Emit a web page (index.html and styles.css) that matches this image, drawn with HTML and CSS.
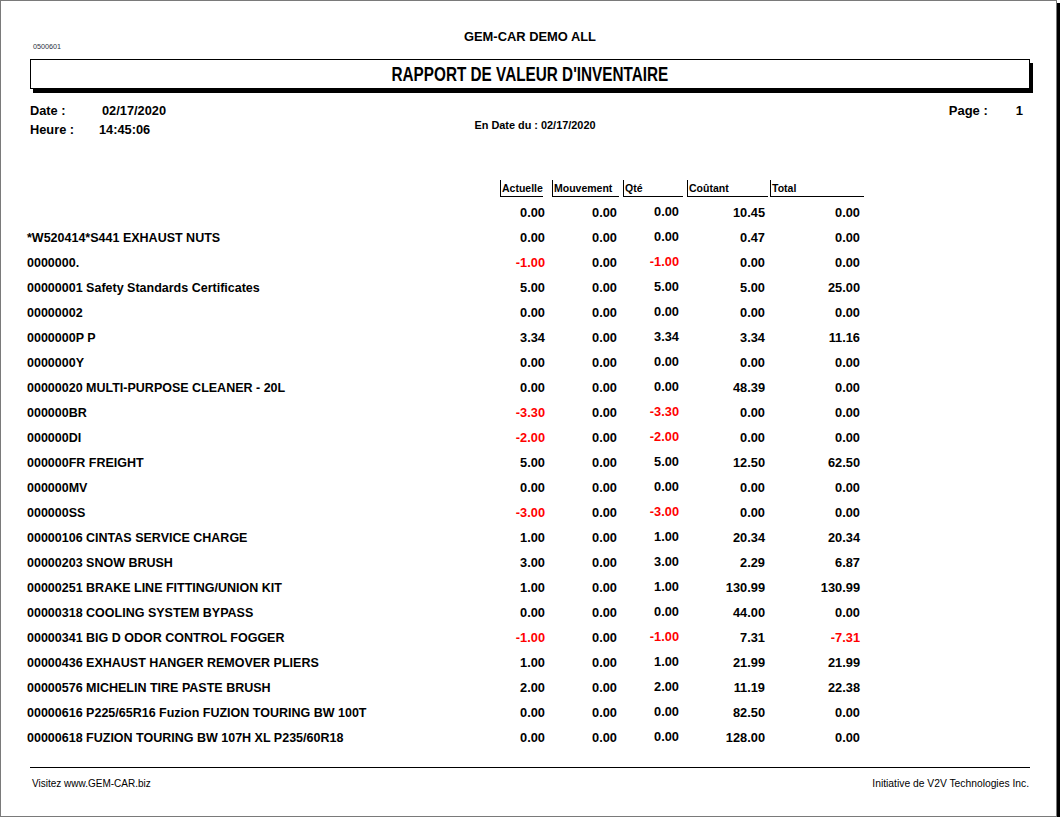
FILE: index.html
```html
<!DOCTYPE html>
<html lang="fr">
<head>
<meta charset="utf-8">
<title>Rapport de valeur d'inventaire</title>
<link rel="stylesheet" href="styles.css">
</head>
<body>
<div class="page">
  <div class="top-row">
    <div class="code">0500601</div>
    <div class="company">GEM-CAR DEMO ALL</div>
    <div></div>
  </div>
  <div class="title-box"><span class="title">RAPPORT DE VALEUR D'INVENTAIRE</span></div>
  <div class="meta">
    <div class="meta-left">
      <div class="meta-line"><span class="lbl lbl-date">Date :</span><span>02/17/2020</span></div>
      <div class="meta-line"><span class="lbl lbl-heure">Heure :</span><span>14:45:06</span></div>
    </div>
    <div class="meta-center">En Date du : 02/17/2020</div>
    <div class="meta-right"><span>Page :</span><span class="page-no">1</span></div>
  </div>

  <div class="table">
    <div class="thead">
      <div></div>
      <div class="th th1">Actuelle</div>
      <div class="th th2">Mouvement</div>
      <div class="th th3">Qté</div>
      <div class="th th4">Coûtant</div>
      <div class="th th5">Total</div>
    </div>
    <div class="tbody">
      <div class="row"><div class="name"></div><div class="n c1">0.00</div><div class="n c2">0.00</div><div class="n c3">0.00</div><div class="n c4">10.45</div><div class="n c5">0.00</div></div>
      <div class="row"><div class="name">*W520414*S441 EXHAUST NUTS</div><div class="n c1">0.00</div><div class="n c2">0.00</div><div class="n c3">0.00</div><div class="n c4">0.47</div><div class="n c5">0.00</div></div>
      <div class="row"><div class="name">0000000.</div><div class="n c1 neg">-1.00</div><div class="n c2">0.00</div><div class="n c3 neg">-1.00</div><div class="n c4">0.00</div><div class="n c5">0.00</div></div>
      <div class="row"><div class="name">00000001 Safety Standards Certificates</div><div class="n c1">5.00</div><div class="n c2">0.00</div><div class="n c3">5.00</div><div class="n c4">5.00</div><div class="n c5">25.00</div></div>
      <div class="row"><div class="name">00000002</div><div class="n c1">0.00</div><div class="n c2">0.00</div><div class="n c3">0.00</div><div class="n c4">0.00</div><div class="n c5">0.00</div></div>
      <div class="row"><div class="name">0000000P P</div><div class="n c1">3.34</div><div class="n c2">0.00</div><div class="n c3">3.34</div><div class="n c4">3.34</div><div class="n c5">11.16</div></div>
      <div class="row"><div class="name">0000000Y</div><div class="n c1">0.00</div><div class="n c2">0.00</div><div class="n c3">0.00</div><div class="n c4">0.00</div><div class="n c5">0.00</div></div>
      <div class="row"><div class="name">00000020 MULTI-PURPOSE CLEANER - 20L</div><div class="n c1">0.00</div><div class="n c2">0.00</div><div class="n c3">0.00</div><div class="n c4">48.39</div><div class="n c5">0.00</div></div>
      <div class="row"><div class="name">000000BR</div><div class="n c1 neg">-3.30</div><div class="n c2">0.00</div><div class="n c3 neg">-3.30</div><div class="n c4">0.00</div><div class="n c5">0.00</div></div>
      <div class="row"><div class="name">000000DI</div><div class="n c1 neg">-2.00</div><div class="n c2">0.00</div><div class="n c3 neg">-2.00</div><div class="n c4">0.00</div><div class="n c5">0.00</div></div>
      <div class="row"><div class="name">000000FR FREIGHT</div><div class="n c1">5.00</div><div class="n c2">0.00</div><div class="n c3">5.00</div><div class="n c4">12.50</div><div class="n c5">62.50</div></div>
      <div class="row"><div class="name">000000MV</div><div class="n c1">0.00</div><div class="n c2">0.00</div><div class="n c3">0.00</div><div class="n c4">0.00</div><div class="n c5">0.00</div></div>
      <div class="row"><div class="name">000000SS</div><div class="n c1 neg">-3.00</div><div class="n c2">0.00</div><div class="n c3 neg">-3.00</div><div class="n c4">0.00</div><div class="n c5">0.00</div></div>
      <div class="row"><div class="name">00000106 CINTAS SERVICE CHARGE</div><div class="n c1">1.00</div><div class="n c2">0.00</div><div class="n c3">1.00</div><div class="n c4">20.34</div><div class="n c5">20.34</div></div>
      <div class="row"><div class="name">00000203 SNOW BRUSH</div><div class="n c1">3.00</div><div class="n c2">0.00</div><div class="n c3">3.00</div><div class="n c4">2.29</div><div class="n c5">6.87</div></div>
      <div class="row"><div class="name">00000251 BRAKE LINE FITTING/UNION KIT</div><div class="n c1">1.00</div><div class="n c2">0.00</div><div class="n c3">1.00</div><div class="n c4">130.99</div><div class="n c5">130.99</div></div>
      <div class="row"><div class="name">00000318 COOLING SYSTEM BYPASS</div><div class="n c1">0.00</div><div class="n c2">0.00</div><div class="n c3">0.00</div><div class="n c4">44.00</div><div class="n c5">0.00</div></div>
      <div class="row"><div class="name">00000341 BIG D ODOR CONTROL FOGGER</div><div class="n c1 neg">-1.00</div><div class="n c2">0.00</div><div class="n c3 neg">-1.00</div><div class="n c4">7.31</div><div class="n c5 neg">-7.31</div></div>
      <div class="row"><div class="name">00000436 EXHAUST HANGER REMOVER PLIERS</div><div class="n c1">1.00</div><div class="n c2">0.00</div><div class="n c3">1.00</div><div class="n c4">21.99</div><div class="n c5">21.99</div></div>
      <div class="row"><div class="name">00000576 MICHELIN TIRE PASTE BRUSH</div><div class="n c1">2.00</div><div class="n c2">0.00</div><div class="n c3">2.00</div><div class="n c4">11.19</div><div class="n c5">22.38</div></div>
      <div class="row"><div class="name">00000616 P225/65R16 Fuzion FUZION TOURING BW 100T</div><div class="n c1">0.00</div><div class="n c2">0.00</div><div class="n c3">0.00</div><div class="n c4">82.50</div><div class="n c5">0.00</div></div>
      <div class="row"><div class="name">00000618 FUZION TOURING BW 107H XL P235/60R18</div><div class="n c1">0.00</div><div class="n c2">0.00</div><div class="n c3">0.00</div><div class="n c4">128.00</div><div class="n c5">0.00</div></div>
    </div>
  </div>

  <div class="footer">
    <span class="visit">Visitez www.GEM-CAR.biz</span>
    <span class="credit">Initiative de V2V Technologies Inc.</span>
  </div>
</div>
</body>
</html>
```

FILE: styles.css
```css
* { box-sizing: border-box; }

html, body {
  margin: 0;
  padding: 0;
  background: #ffffff;
}

body {
  font-family: "Liberation Sans", Arial, sans-serif;
  color: #000;
}

.page {
  width: 1057px;
  height: 817px;
  border: 1px solid #7a7a7a;
  box-shadow: 3px 3px 0 #000;
  display: flex;
  flex-direction: column;
  padding: 0 26px 0 29px;
  background: #fff;
}

.top-row {
  margin-top: 28px;
  height: 22px;
  display: grid;
  grid-template-columns: 1fr auto 1fr;
}

.code {
  align-self: end;
  font-size: 7.2px;
  line-height: 8px;
  color: #2a2f40;
  padding-left: 3px;
}

.company {
  font-size: 12.9px;
  font-weight: bold;
  line-height: 16px;
  text-align: center;
}

.title-box {
  margin-top: 8px;
  height: 30px;
  border: 1px solid #000;
  box-shadow: 3px 4px 0 #000;
  display: flex;
  justify-content: center;
  align-items: center;
}

.title {
  display: inline-block;
  font-size: 20px;
  font-weight: bold;
  line-height: 28px;
  transform: scaleX(0.765);
  white-space: nowrap;
}

.meta {
  margin-top: 12px;
  display: grid;
  grid-template-columns: 1fr auto 1fr;
  font-weight: bold;
}

.meta-line {
  font-size: 12.8px;
  line-height: 19px;
  display: flex;
}

.lbl-date { width: 72px; }
.lbl-heure { width: 69px; }

.meta-center {
  font-size: 10.9px;
  line-height: 19px;
  padding-top: 15px;
  padding-left: 10px;
}

.meta-right {
  display: flex;
  justify-content: flex-end;
  font-size: 13px;
  line-height: 19px;
  padding-right: 7px;
}

.page-no { margin-left: 28px; }

.table {
  margin-top: 41px;
  margin-left: -3px;
}

.thead,
.row {
  display: grid;
  grid-template-columns: 473px 52px 71px 64px 83px 94px;
}

.thead {
  height: 16px;
}

.th {
  border-left: 1px solid #000;
  border-bottom: 1px solid #000;
  font-size: 10.5px;
  font-weight: bold;
  line-height: 15px;
  padding-top: 1px;
  padding-left: 1px;
  white-space: nowrap;
}

.th1 { width: 43px; }
.th2 { width: 67px; }
.th3 { width: 60px; }
.th4 { width: 81px; }
.th5 { width: 94px; }

.tbody {
  margin-top: 4px;
}

.row {
  height: 25px;
  align-items: center;
  font-weight: bold;
}

.name {
  font-size: 12.5px;
  padding-top: 1px;
  white-space: nowrap;
}

.n {
  font-size: 12.8px;
  text-align: right;
}

.c1 { padding-right: 7px; }
.c2 { padding-right: 6px; }
.c3 { padding-right: 8px; padding-bottom: 2px; }
.c4 { padding-right: 5px; }
.c5 { padding-right: 4px; }

.neg { color: #ff0000; }

.footer {
  margin-top: auto;
  margin-bottom: 25px;
  border-top: 1px solid #000;
  display: flex;
  justify-content: space-between;
  align-items: center;
  padding: 9px 1px 0 2px;
  line-height: 14px;
  color: #000;
}

.visit { font-size: 10px; }
.credit { font-size: 10.3px; }
```
